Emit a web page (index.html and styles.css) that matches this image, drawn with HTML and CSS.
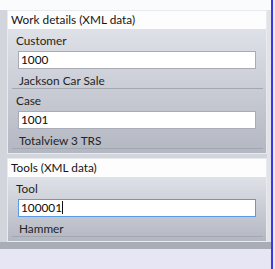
FILE: index.html
```html
<!DOCTYPE html>
<html lang="en">
<head>
  <meta charset="UTF-8" />
  <title>Work details</title>
  <link rel="stylesheet" href="styles.css">
</head>
<body>
  <div class="window">
    <div class="content">
      <div class="topbar"></div>

      <div class="pane">
        <section class="group">
          <div class="group-head">Work details (XML data)</div>
          <div class="group-body">
            <div class="field">
              <div class="field-label">Customer</div>
              <div class="textbox">1000</div>
              <div class="lookup">Jackson Car Sale</div>
            </div>
            <div class="field">
              <div class="field-label">Case</div>
              <div class="textbox">1001</div>
              <div class="lookup">Totalview 3 TRS</div>
            </div>
          </div>
        </section>

        <section class="group second">
          <div class="group-head">Tools (XML data)</div>
          <div class="group-body">
            <div class="field">
              <div class="field-label">Tool</div>
              <div class="textbox focused">100001<span class="caret"></span></div>
              <div class="lookup">Hammer</div>
            </div>
          </div>
        </section>
      </div>

      <div class="bottom-band"></div>
      <div class="footer"></div>
    </div>
    <div class="vline"></div>
    <div class="edge"></div>
  </div>
</body>
</html>
```

FILE: styles.css
```css
body {
  margin: 0;
  font-family: 'Lato', 'Liberation Sans', sans-serif;
  font-size: 11.8px;
  color: #1c1c1c;
  background: #e6e6f5;
}

.window {
  display: flex;
  width: 275px;
  height: 269px;
  overflow: hidden;
}

.content {
  width: 271px;
  display: flex;
  flex-direction: column;
}

.topbar {
  height: 10px;
  background: #fafbfc;
}

.pane {
  background: #d2d5dc;
  padding-left: 7px;
  border-right: 4px solid #e1e3e8;
}

.group {
  border: 1px solid #e8eaee;
}

.group.second {
  margin-top: 4px;
}

.group-head {
  height: 18px;
  line-height: 18px;
  padding-left: 3px;
  background: #fdfdfd;
  color: #141414;
}

.group-body {
  background: linear-gradient(#dfe1e8, #b3b7c1);
  padding-bottom: 4px;
}

.field {
  height: 59px;
  margin: 0 3px 0 4px;
  border-bottom: 1px solid #a3a7b0;
}

.field-label {
  padding: 4px 0 0 4px;
  height: 15px;
  line-height: 15px;
  color: #261f16;
}

.textbox {
  margin: 3px 7px 0 6px;
  height: 16px;
  line-height: 16px;
  padding-left: 2px;
  background: #fff;
  border: 1px solid #a9acb4;
  color: #0c0c0c;
}

.textbox.focused {
  border-color: #5a9be6;
}

.caret {
  display: inline-block;
  width: 1px;
  height: 13px;
  background: #111;
  vertical-align: -2px;
}

.lookup {
  padding: 4px 0 0 7px;
  line-height: 15px;
  color: #242424;
}

.bottom-band {
  height: 7px;
  background: #a9adb6;
}

.footer {
  flex: 1;
  background: #e6e6f5;
}

.vline {
  width: 2px;
  background: #3a3ae0;
}

.edge {
  width: 2px;
  background: #ececf2;
}
```
